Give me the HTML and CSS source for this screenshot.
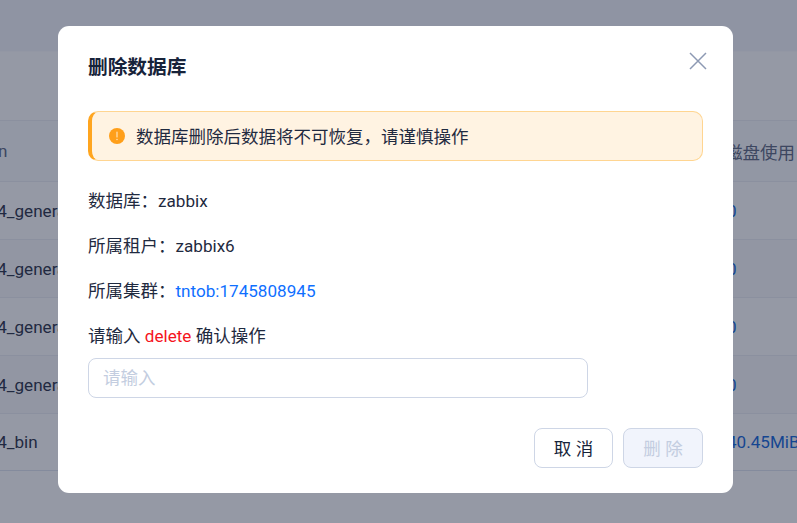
FILE: index.html
```html
<!DOCTYPE html>
<html lang="zh-CN">
<head>
  <meta charset="UTF-8" />
  <title>删除数据库</title>
  <link rel="stylesheet" href="styles.css">
</head>
<body>

  <div class="page">
    <div class="topbar"></div>
    <div class="toolbar"></div>
    <div class="row head">
      <span class="cell-name">Collation</span>
      <span class="cell-disk">磁盘使用</span>
    </div>
    <div class="row">
      <span class="cell-name">utf8mb4_general_ci</span>
      <span class="cell-disk link">0</span>
    </div>
    <div class="row alt">
      <span class="cell-name">utf8mb4_general_ci</span>
      <span class="cell-disk link">0</span>
    </div>
    <div class="row">
      <span class="cell-name">utf8mb4_general_ci</span>
      <span class="cell-disk link">0</span>
    </div>
    <div class="row alt">
      <span class="cell-name">utf8mb4_general_ci</span>
      <span class="cell-disk link">0</span>
    </div>
    <div class="row last">
      <span class="cell-name">utf8mb4_bin</span>
      <span class="cell-disk link">40.45MiB</span>
    </div>
  </div>

  <div class="overlay"></div>

  <div class="modal">
    <div class="modal-header">
      <h2>删除数据库</h2>
      <button class="close-btn" aria-label="关闭">
        <svg width="18" height="18" viewBox="0 0 18 18" fill="none" stroke="#8d99b3" stroke-width="1.5">
          <path d="M1 1 L17 17 M17 1 L1 17" />
        </svg>
      </button>
    </div>

    <div class="alert">
      <svg class="alert-icon" width="16" height="16" viewBox="0 0 16 16">
        <circle cx="8" cy="8" r="8" fill="#ff9f1a" />
        <path d="M8 4 V9" stroke="#ffe9c8" stroke-width="1.1" stroke-linecap="round" />
        <circle cx="8" cy="11.5" r="0.7" fill="#ffe9c8" />
      </svg>
      <span>数据库删除后数据将不可恢复，请谨慎操作</span>
    </div>

    <p class="info">数据库：<span class="latin">zabbix</span></p>
    <p class="info">所属租户：<span class="latin">zabbix6</span></p>
    <p class="info">所属集群：<a href="#" class="latin cluster">tntob:1745808945</a></p>
    <p class="info confirm">请输入 <span class="latin danger">delete</span> 确认操作</p>
    <input type="text" class="confirm-input" placeholder="请输入" />

    <div class="modal-footer">
      <button class="btn">取 消</button>
      <button class="btn disabled" disabled>删 除</button>
    </div>
  </div>

</body>
</html>
```

FILE: styles.css
```css
* {
  margin: 0;
  padding: 0;
  box-sizing: border-box;
}

html, body {
  height: 100%;
}

body {
  font-family: Roboto, "Noto Sans CJK SC", sans-serif;
  font-size: 17.5px;
  color: #1f2a40;
  overflow: hidden;
  background: #fff;
}

.latin {
  font-size: 17.1px;
}

.page {
  display: flex;
  flex-direction: column;
  height: 100%;
  white-space: nowrap;
  overflow: hidden;
}

.topbar {
  height: 51px;
  background: #f4f6fb;
}

.toolbar {
  height: 69px;
  background: #ffffff;
  border-top: 1px solid #fbfbfd;
}

.row {
  display: flex;
  justify-content: space-between;
  align-items: center;
  height: 58px;
  border-top: 1px solid #eceef3;
  background: #fff;
  overflow: hidden;
  font-size: 17.1px;
}

.row.head {
  height: 61px;
  background: #fafbfd;
  color: #56627c;
}

.row.alt {
  background: #f9fafc;
}

.row.last {
  border-bottom: 1px solid #dfe4f0;
}

.cell-name {
  margin-left: -58px;
}

.row.head .cell-name {
  margin-left: -60px;
}

.cell-disk {
  width: 70px;
  flex-shrink: 0;
}

.row.head .cell-disk {
  width: 72px;
  padding-right: 2px;
  font-size: 17.5px;
}

.link {
  color: #0a5fd8;
}

.overlay {
  position: fixed;
  top: 0; left: 0; right: 0; bottom: 0;
  background: rgba(34, 42, 67, 0.48);
}

.modal {
  position: fixed;
  top: 26px;
  left: 58px;
  width: 675px;
  height: 467px;
  padding: 0 30px;
  background: #fff;
  border-radius: 11px;
}

.modal-header {
  display: flex;
  align-items: center;
  justify-content: space-between;
  height: 85px;
  padding-bottom: 6px;
}

.modal-header h2 {
  font-size: 19.7px;
  font-weight: 600;
  color: #17233a;
}

.close-btn {
  display: flex;
  border: none;
  background: none;
  margin-top: -9px;
  margin-right: -4px;
  cursor: pointer;
}

.alert {
  display: flex;
  align-items: center;
  gap: 11px;
  height: 50px;
  padding-left: 17px;
  background: #fff3e2;
  border: 1px solid #ffd591;
  border-left: 4px solid #ffa51f;
  border-radius: 10px;
}

.alert span {
  margin-top: -2px;
}

.alert-icon {
  flex-shrink: 0;
}

.info {
  height: 45px;
  line-height: 46px;
}

.alert + .info {
  margin-top: 17px;
}

.cluster {
  color: #0f6fff;
  text-decoration: none;
}

.danger {
  color: #f5141c;
}

.confirm-input {
  display: block;
  width: 500px;
  height: 40px;
  margin-top: 0;
  padding: 0 14px;
  font: inherit;
  border: 1px solid #ced6e6;
  border-radius: 8px;
  outline: none;
}

.confirm-input::placeholder {
  color: #c3cde0;
}

.modal-footer {
  display: flex;
  justify-content: flex-end;
  gap: 10px;
  margin-top: 30px;
}

.btn {
  width: 79px;
  height: 40px;
  padding-bottom: 2px;
  font: inherit;
  color: #17233a;
  background: #fff;
  border: 1px solid #ced6e6;
  border-radius: 8px;
  cursor: pointer;
}

.btn.disabled {
  width: 80px;
  color: #c3cde0;
  background: #f1f4fc;
  cursor: not-allowed;
}
```
